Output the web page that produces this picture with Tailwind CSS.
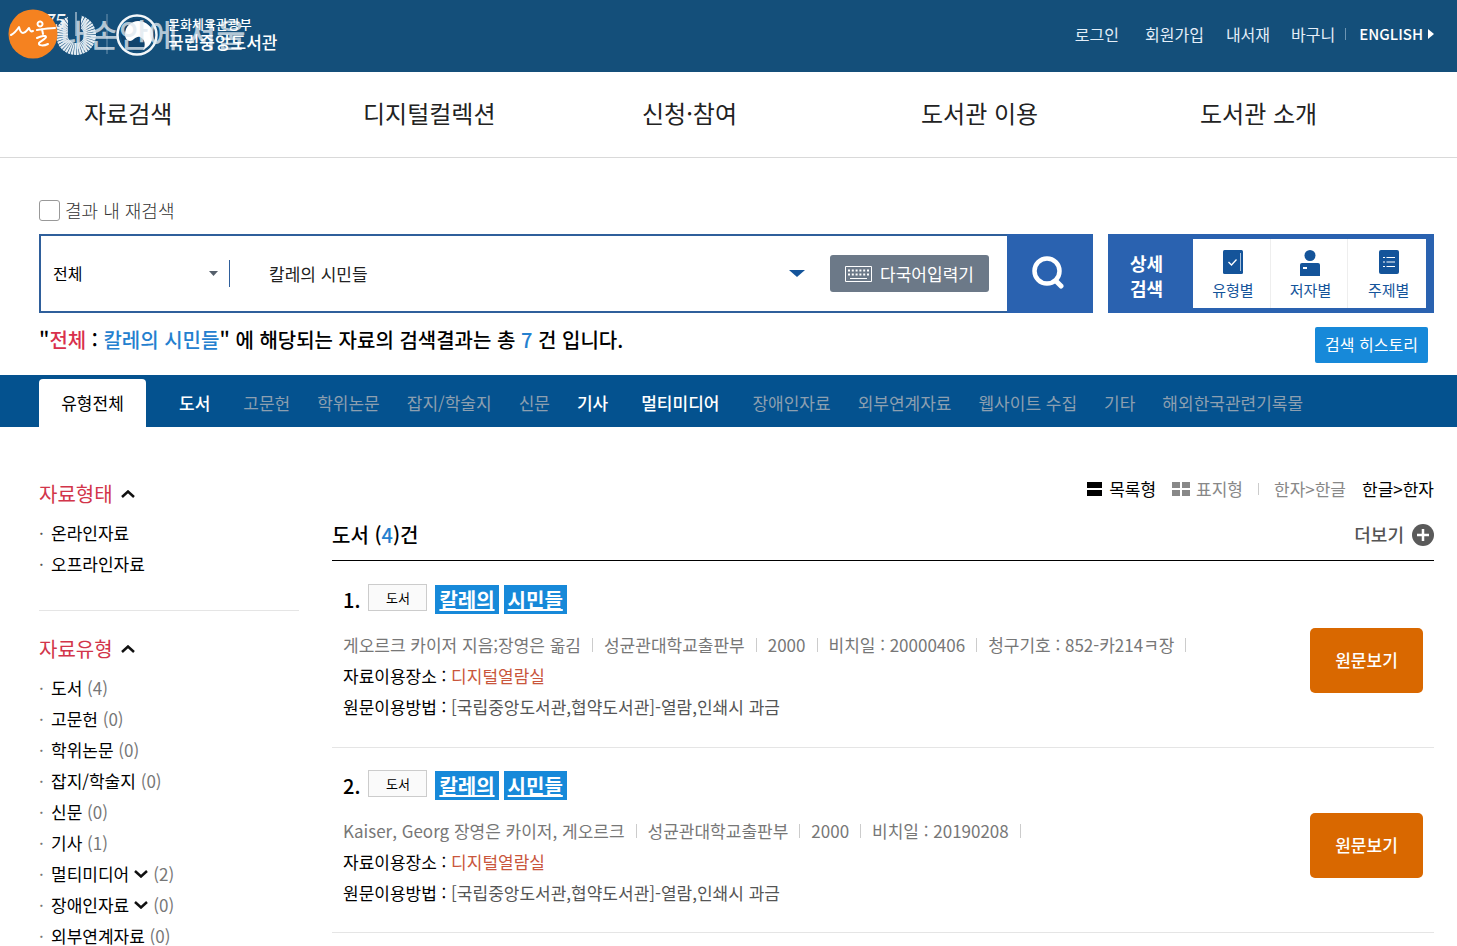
<!DOCTYPE html>
<html lang="ko">
<head>
<meta charset="utf-8">
<title>국립중앙도서관 검색결과</title>
<script src="https://cdn.jsdelivr.net/npm/@tailwindcss/browser@4"></script>
</head>
<body class="bg-white text-black text-[17px] leading-[31px] font-['Noto_Sans_CJK_KR',sans-serif]">

<header class="flex h-[72px] items-center justify-between bg-[#144f7a] pl-2 pr-[23px] text-[16px] leading-6 text-[#e4eef8]">
  <a href="#" aria-label="국립중앙도서관">
    <svg width="280" height="56" viewBox="8 8 280 56" fill="none">
      <circle cx="76" cy="35" r="14" stroke="#e6eef4" stroke-width="12" stroke-dasharray="1.700 .5" pathLength="88"/>
      <path d="M68 14h13v22q0 6-6 6t-7-6z" fill="#144f7a"/>
      <path d="M76 12v24" stroke="#e6eef4" stroke-width="1"/>
      <text x="44" y="28" font-size="22" font-weight="700" font-style="italic" fill="#eef4f8" font-family="Liberation Serif">75</text>
      <circle cx="137" cy="35" r="19.500" stroke="#f3f7fa" stroke-width="2.500"/>
      <circle cx="137" cy="35" r="16" fill="#10436d"/>
      <path d="M125 34c0-8 7-13 13-13 8 0 15 6 15 13 0 8-4 13-10 16 3-5 2-11-3-13-5-1-6 4-10 4-3 0-5-3-5-7z" fill="#fff"/>
      <path d="M107 14v40" stroke="#6f95b0" stroke-width="1"/>
      <text x="60" y="47" font-size="32" font-weight="500" fill="#dfe8ef" fill-opacity=".78" font-family="Noto Sans CJK KR">내손안에 서울</text>
      <text x="168" y="29" font-size="13" font-weight="500" fill="#fff" font-family="Noto Sans CJK KR">문화체육관광부</text>
      <text x="168" y="49" font-size="17" font-weight="500" fill="#fff" font-family="Noto Sans CJK KR">국립중앙도서관</text>
      <circle cx="33" cy="34" r="24.500" fill="#f58220"/>
      <path d="M11 35c4-2 6-5 8-8 1 4 2 6 4 6 3 0 4-3 6-5 1 3 2 4 4 3M37 30c6-1 12-2 18-2M40 21.500a2.500 2.500 0 1 0 .1 0M42 29l1 5M37 38c4-2 9-3 9-1s-6 4-7 6c-1 3 5 3 9 1" stroke="#fff" stroke-width="2" stroke-linecap="round" stroke-linejoin="round"/>
    </svg>
  </a>
  <nav class="flex items-center pb-1">
    <a href="#">로그인</a>
    <a href="#" class="ml-[26px]">회원가입</a>
    <a href="#" class="ml-[22px]">내서재</a>
    <a href="#" class="ml-[21px]">바구니</a>
    <span class="ml-[10px] h-3 w-px bg-[#6d95b3]"></span>
    <a href="#" class="ml-[13px] flex items-center text-[15px] font-medium text-white">ENGLISH
      <svg class="ml-[5px]" width="6" height="10" viewBox="0 0 6 10"><path d="M0 0l6 5-6 5z" fill="#fff"/></svg></a>
  </nav>
</header>

<nav class="grid h-[86px] grid-cols-5 items-center border-b border-[#d9d9d9] pb-1 pl-[39px] pr-[23px] text-[24px] text-[#222]">
  <a href="#" class="pl-[45px]">자료검색</a>
  <a href="#" class="pl-[45px]">디지털컬렉션</a>
  <a href="#" class="pl-[45px]">신청·참여</a>
  <a href="#" class="pl-[45px]">도서관 이용</a>
  <a href="#" class="pl-[45px]">도서관 소개</a>
</nav>

<section class="pt-9 pl-[39px] pr-[23px]">
  <label class="flex h-8 items-center gap-[5px] text-[18px] font-light text-[#333]">
    <input type="checkbox" class="size-[21px] appearance-none rounded-[3px] border border-[#999] bg-white">결과 내 재검색
  </label>

  <form class="mt-2 flex h-[79px] gap-[15px]">
    <div class="flex flex-1 border-2 border-r-0 border-[#2f5f9b]">
      <div class="flex flex-1 items-center">
        <div class="relative flex w-[188px] items-center">
          <select aria-label="검색 범위" class="w-full appearance-none bg-transparent pl-3 text-[16px]"><option>전체</option></select>
          <svg class="absolute right-[11px]" width="9" height="5" viewBox="0 0 9 5"><path d="M0 0h9L4.500 5z" fill="#555f6b"/></svg>
        </div>
        <span class="h-[27px] w-px bg-[#2f5f9b]"></span>
        <input type="text" aria-label="검색어" value="칼레의 시민들" class="min-w-0 flex-1 pl-[39px] text-[17px] text-[#222] outline-none">
        <svg width="16" height="7" viewBox="0 0 16 7"><path d="M0 0h16L8 7z" fill="#14549a"/></svg>
        <button type="button" class="mr-[18px] ml-[25px] flex h-[37px] w-[159px] items-center justify-center gap-2 rounded-[3px] bg-[#6c7988] text-white">
          <svg width="27" height="16" viewBox="0 0 27 16" fill="none" stroke="#fff"><path d="M.5.5h26v15H.5z"/><path d="M3 4.500h21M3 8.500h21" stroke-width="2" stroke-dasharray="2 1.800"/><path d="M5 12.500h17"/></svg>
          다국어입력기
        </button>
      </div>
      <button type="submit" aria-label="검색" class="-my-[2px] flex w-[86px] items-center justify-center bg-[#2a62b0] pr-1 pb-[2px]">
        <svg width="32" height="33" viewBox="0 0 32 33" fill="none" stroke="#fff"><circle cx="15" cy="15" r="12.500" stroke-width="4.500"/><path d="M24 25l5 5" stroke-width="5" stroke-linecap="round"/></svg>
      </button>
    </div>
    <div class="flex w-[326px] bg-[#2a62b0] py-[5px] pr-2">
      <strong class="flex w-[85px] items-center justify-center pt-1 pr-2 text-center text-[18px] leading-[25px] font-bold text-white">상세<br>검색</strong>
      <div class="grid flex-1 grid-cols-3 divide-x divide-[#eee] bg-white text-[15px] leading-[22px] text-[#14549a]">
        <a href="#" class="flex flex-col items-center gap-[5px] pt-[11px] pl-[3px]">
          <svg width="20" height="24" viewBox="0 0 20 24"><rect width="20" height="24" rx="1.500" fill="#14549a"/><path d="M5.500 12l3 3 5-5.500" fill="none" stroke="#fff" stroke-width="1.300"/><path d="M17.500 3v18" stroke="#a9c1dc"/></svg>유형별</a>
        <a href="#" class="flex flex-col items-center gap-[5px] pt-[11px] pl-[3px]">
          <svg class="-mb-[2px]" width="20" height="26" viewBox="0 0 20 26"><circle cx="10" cy="5.500" r="5.500" fill="#14549a"/><path d="M0 15q0-2 2-2h16q2 0 2 2v11H0z" fill="#14549a"/><path d="M3 18h4" stroke="#fff" stroke-width="2"/></svg>저자별</a>
        <a href="#" class="flex flex-col items-center gap-[5px] pt-[11px] pl-[3px]">
          <svg width="20" height="24" viewBox="0 0 20 24"><rect width="20" height="24" rx="2" fill="#14549a"/><path d="M4 7.500h2M7.500 7.500H16M4 12h2M7.500 12H16M4 16.500h2M7.500 16.500H16" stroke="#fff" stroke-width="1.200"/></svg>주제별</a>
      </div>
    </div>
  </form>

  <div class="flex h-[62px] items-start justify-between pr-[6px] pt-[14px]">
    <p class="text-[20px] leading-[26px] font-medium">"<span class="text-[#d9304c]">전체</span> : <span class="text-[#2480cf]">칼레의 시민들</span>" 에 해당되는 자료의 검색결과는 총 <span class="text-[#2480cf]">7</span> 건 입니다.</p>
    <button type="button" class="h-9 w-[113px] rounded-[2px] bg-[#1789d9] pb-[2px] text-[16px] leading-[34px] text-white">검색 히스토리</button>
  </div>
</section>

<nav class="flex h-[52px] items-end bg-[#04528f] pl-[39px] leading-[48px] text-[#8c9fb0]">
  <a href="#" class="w-[107px] rounded-t-[4px] bg-white text-center text-black">유형전체</a>
  <a href="#" class="ml-[33px] font-medium text-white">도서</a>
  <a href="#" class="ml-[33px]">고문헌</a>
  <a href="#" class="ml-[27px]">학위논문</a>
  <a href="#" class="ml-[27px]">잡지/학술지</a>
  <a href="#" class="ml-[27px]">신문</a>
  <a href="#" class="ml-[27px] font-medium text-white">기사</a>
  <a href="#" class="ml-[33px] font-medium text-white">멀티미디어</a>
  <a href="#" class="ml-[33px]">장애인자료</a>
  <a href="#" class="ml-[27px]">외부연계자료</a>
  <a href="#" class="ml-[27px]">웹사이트 수집</a>
  <a href="#" class="ml-[27px]">기타</a>
  <a href="#" class="ml-[27px]">해외한국관련기록물</a>
</nav>

<main class="flex gap-[33px] pl-[39px] pr-[23px]">
  <aside class="w-[260px] shrink-0 pt-[51px]">
    <section class="border-b border-[#e5e5e5] pb-[31px]">
      <h2 class="flex items-center gap-2 text-[20px] text-[#d2354a]">자료형태
        <svg width="14" height="8" viewBox="0 0 14 8" fill="none" stroke="#111" stroke-width="2.500"><path d="M1 7l6-5.500L13 7"/></svg></h2>
      <ul class="mt-2">
        <li><span class="inline-block w-3 text-[#555]">·</span><a href="#">온라인자료</a></li>
        <li><span class="inline-block w-3 text-[#555]">·</span><a href="#">오프라인자료</a></li>
      </ul>
    </section>
    <section class="pt-[22px]">
      <h2 class="flex items-center gap-2 text-[20px] text-[#d2354a]">자료유형
        <svg width="14" height="8" viewBox="0 0 14 8" fill="none" stroke="#111" stroke-width="2.500"><path d="M1 7l6-5.500L13 7"/></svg></h2>
      <ul class="mt-2 text-[#777]">
        <li><span class="inline-block w-3">·</span><a href="#" class="text-black">도서</a> (4)</li>
        <li><span class="inline-block w-3">·</span><a href="#" class="text-black">고문헌</a> (0)</li>
        <li><span class="inline-block w-3">·</span><a href="#" class="text-black">학위논문</a> (0)</li>
        <li><span class="inline-block w-3">·</span><a href="#" class="text-black">잡지/학술지</a> (0)</li>
        <li><span class="inline-block w-3">·</span><a href="#" class="text-black">신문</a> (0)</li>
        <li><span class="inline-block w-3">·</span><a href="#" class="text-black">기사</a> (1)</li>
        <li class="flex items-center"><span class="w-3">·</span><a href="#" class="text-black">멀티미디어</a>
          <svg class="mx-[5px]" width="14" height="8" viewBox="0 0 14 8" fill="none" stroke="#111" stroke-width="2.500"><path d="M1 1l6 5.500L13 1"/></svg>(2)</li>
        <li class="flex items-center"><span class="w-3">·</span><a href="#" class="text-black">장애인자료</a>
          <svg class="mx-[5px]" width="14" height="8" viewBox="0 0 14 8" fill="none" stroke="#111" stroke-width="2.500"><path d="M1 1l6 5.500L13 1"/></svg>(0)</li>
        <li><span class="inline-block w-3">·</span><a href="#" class="text-black">외부연계자료</a> (0)</li>
      </ul>
    </section>
  </aside>

  <div class="min-w-0 flex-1 pt-[46px]">
    <div class="flex items-center justify-end text-[#888]">
      <a href="#" class="flex items-center gap-[7px] text-black"><svg width="15" height="14" viewBox="0 0 15 14"><path d="M0 0h15v6H0zM0 8h15v6H0z"/></svg>목록형</a>
      <a href="#" class="ml-4 flex items-center gap-[6px]"><svg width="18" height="14" viewBox="0 0 18 14" fill="#888"><path d="M0 0h8v6H0zM10 0h8v6h-8zM0 8h8v6H0zM10 8h8v6h-8z"/></svg>표지형</a>
      <span class="mx-[15px] h-3 w-px bg-[#ccc]"></span>
      <a href="#">한자&gt;한글</a>
      <a href="#" class="ml-4 text-black">한글&gt;한자</a>
    </div>
    <div class="mt-[7px] flex h-[50px] items-center justify-between border-b border-black pb-[2px]">
      <h2 class="text-[20px] font-medium">도서 (<span class="text-[#2480cf]">4</span>)건</h2>
      <a href="#" class="flex items-center gap-2 text-[18px] font-medium text-[#555]">더보기
        <svg width="22" height="22" viewBox="0 0 22 22"><circle cx="11" cy="11" r="11" fill="#5a5a5a"/><path d="M11 5v12M5 11h12" stroke="#fff" stroke-width="2.500"/></svg></a>
    </div>

    <article class="flex items-start justify-between border-b border-[#e5e5e5] px-[11px] pt-[23px] pb-[25px]">
      <div>
        <div class="flex items-center text-[20px] font-medium">1.
          <span class="mb-1 ml-2 h-[27px] w-[59px] border border-[#ccc] bg-[#fafafa] text-center text-[13px] leading-[25px] font-normal">도서</span>
          <a href="#" class="ml-2 flex gap-[5px] leading-[29px] font-bold text-white underline"><mark class="bg-[#1789d9] px-1 text-white">칼레의</mark><mark class="bg-[#1789d9] px-1 text-white">시민들</mark></a>
        </div>
        <p class="mt-[14px] flex items-center text-[#777]">게오르크 카이저 지음;장영은 옮김<span class="mx-[11px] h-[14px] w-px bg-[#ccc]"></span>성균관대학교출판부<span class="mx-[11px] h-[14px] w-px bg-[#ccc]"></span>2000<span class="mx-[11px] h-[14px] w-px bg-[#ccc]"></span>비치일 : 20000406<span class="mx-[11px] h-[14px] w-px bg-[#ccc]"></span>청구기호 : 852-카214ㅋ장<span class="mx-[11px] h-[14px] w-px bg-[#ccc]"></span></p>
        <p>자료이용장소 : <a href="#" class="text-[#c9563c]">디지털열람실</a></p>
        <p>원문이용방법 : <span class="text-[#555]">[국립중앙도서관,협약도서관]-열람,인쇄시 과금</span></p>
      </div>
      <button type="button" class="mt-11 h-[65px] w-[113px] rounded-[5px] bg-[#d96800] pb-[2px] font-medium text-white">원문보기</button>
    </article>

    <article class="flex items-start justify-between border-b border-[#e5e5e5] px-[11px] pt-[22px] pb-6">
      <div>
        <div class="flex items-center text-[20px] font-medium">2.
          <span class="mb-1 ml-2 h-[27px] w-[59px] border border-[#ccc] bg-[#fafafa] text-center text-[13px] leading-[25px] font-normal">도서</span>
          <a href="#" class="ml-2 flex gap-[5px] leading-[29px] font-bold text-white underline"><mark class="bg-[#1789d9] px-1 text-white">칼레의</mark><mark class="bg-[#1789d9] px-1 text-white">시민들</mark></a>
        </div>
        <p class="mt-[14px] flex items-center text-[#777]">Kaiser, Georg 장영은 카이저, 게오르크<span class="mx-[11px] h-[14px] w-px bg-[#ccc]"></span>성균관대학교출판부<span class="mx-[11px] h-[14px] w-px bg-[#ccc]"></span>2000<span class="mx-[11px] h-[14px] w-px bg-[#ccc]"></span>비치일 : 20190208<span class="mx-[11px] h-[14px] w-px bg-[#ccc]"></span></p>
        <p>자료이용장소 : <a href="#" class="text-[#c9563c]">디지털열람실</a></p>
        <p>원문이용방법 : <span class="text-[#555]">[국립중앙도서관,협약도서관]-열람,인쇄시 과금</span></p>
      </div>
      <button type="button" class="mt-[43px] h-[65px] w-[113px] rounded-[5px] bg-[#d96800] pb-[2px] font-medium text-white">원문보기</button>
    </article>
  </div>
</main>
</body>
</html>
